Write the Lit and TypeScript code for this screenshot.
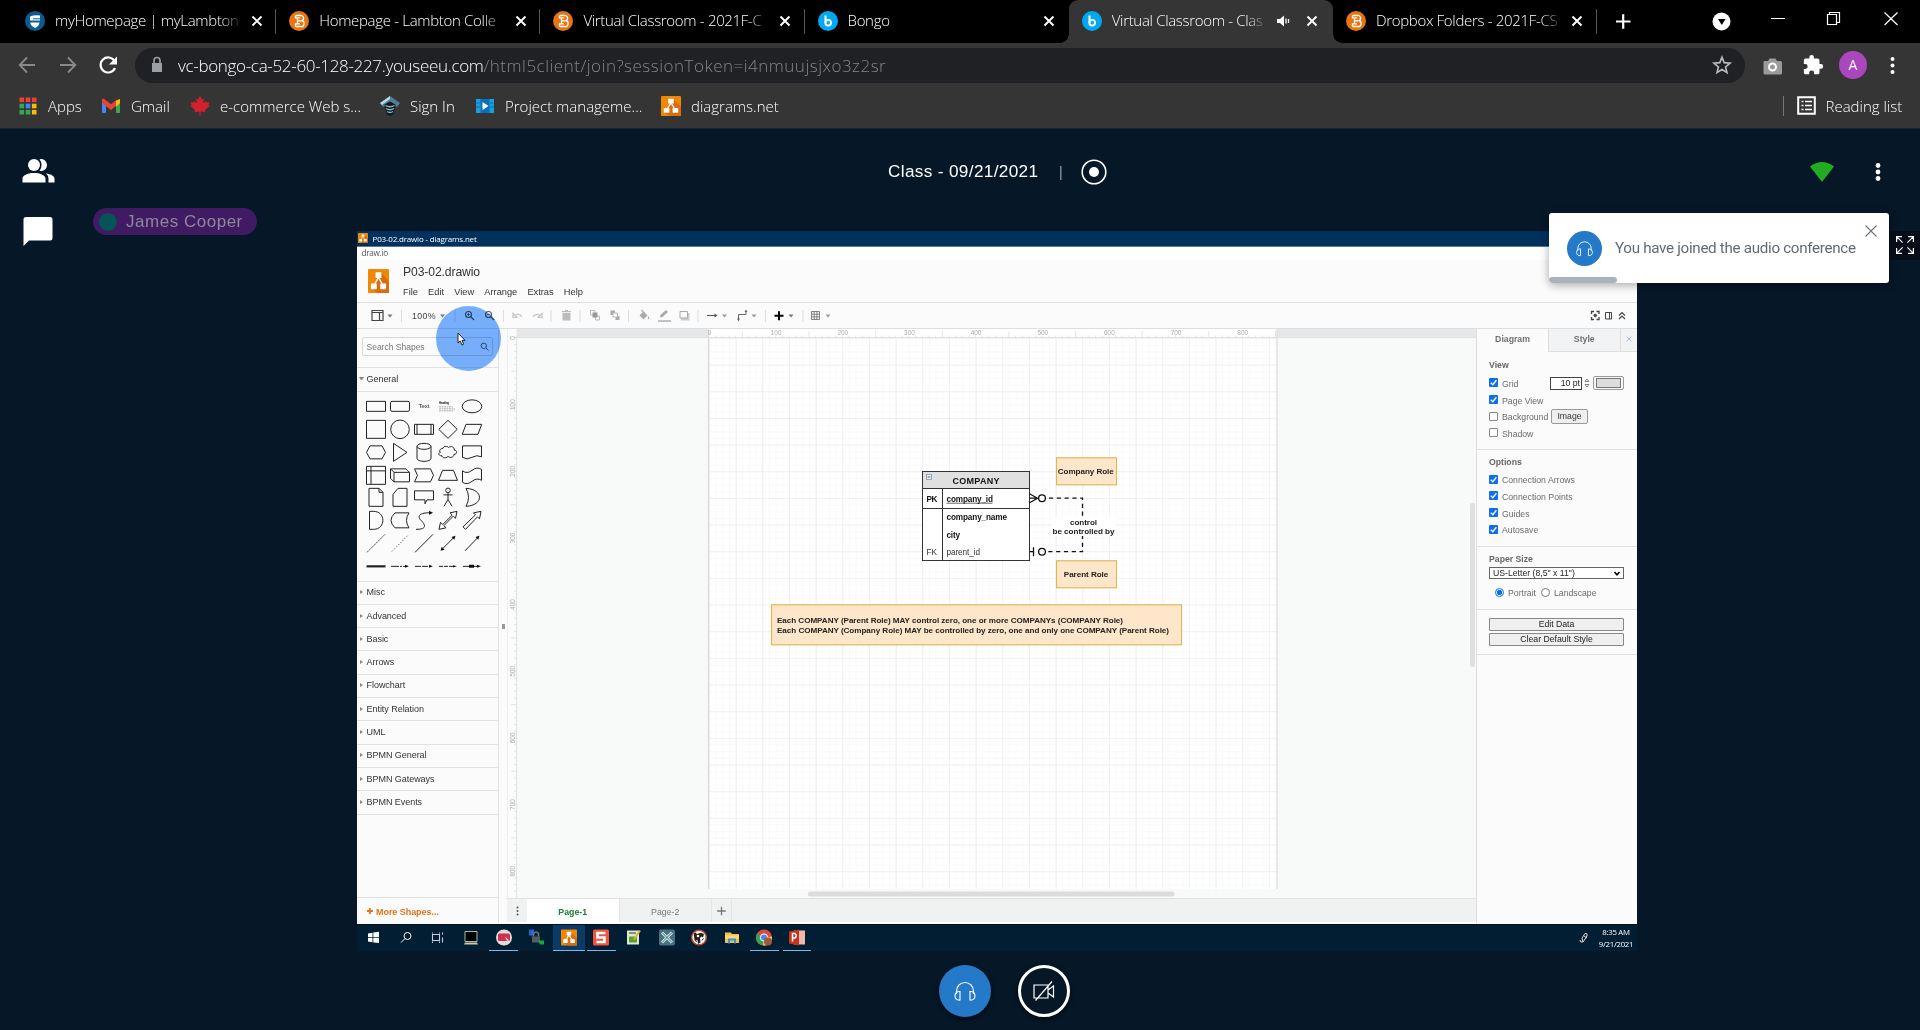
import { LitElement, html, svg, css } from "lit";
import { customElement } from "lit/decorators.js";
import { classMap } from "lit/directives/class-map.js";

const range = (n: number) => Array.from({ length: n }, (_, i) => i);

/* ---------- shared icons ---------- */
const drawioMark = () => svg`
  <rect width="20" height="20" rx="1" fill="#f08705"/>
  <path d="M12.5 3 20 10.5V20H9L3 16l6-8z" fill="#df6c0c"/>
  <path d="M10 7 5.5 14M10 7l4.500 7" stroke="#fff" stroke-width="1.300" fill="none"/>
  <rect x="7.200" y="2.800" width="5.600" height="4.800" rx=".6" fill="#fff"/>
  <rect x="2.800" y="12" width="5.600" height="4.800" rx=".6" fill="#fff"/>
  <rect x="11.600" y="12" width="5.600" height="4.800" rx=".6" fill="#fff"/>`;

const favicons: Record<string, any> = {
  lambton: svg`<circle cx="10" cy="10" r="10" fill="#0b5c93"/><path d="M5 5.500Q10 3.500 15 4.500V9.500H5zM5.500 11.500H14.500Q14 15 10 17 6.500 15.500 5.500 13Z" fill="#fff"/><path d="M8 7.300h7v1h-7z" fill="#0b5c93"/>`,
  brightspace: svg`<circle cx="10" cy="10" r="10" fill="#e87511"/><path d="M6.500 4.500h5a2.700 2.700 0 0 1 1.300 5.200 2.900 2.900 0 0 1-1.300 5.800h-5M6.500 4.500v2.400h4.700M8.500 9.900h3.500M6.500 15.500v-2.600h4.500M8.500 6.900v6" fill="none" stroke="#fff" stroke-width="1.300"/>`,
  bongo: svg`<circle cx="10" cy="10" r="10" fill="#02a9f0"/><path d="M7.500 4.500v7.500" stroke="#fff" stroke-width="2"/><circle cx="10.200" cy="11.700" r="2.800" fill="none" stroke="#fff" stroke-width="1.900"/>`,
};

const tabs = [
  { icon: "lambton", title: "myHomepage | myLambton" },
  { icon: "brightspace", title: "Homepage - Lambton Colle" },
  { icon: "brightspace", title: "Virtual Classroom - 2021F-C" },
  { icon: "bongo", title: "Bongo" },
  { icon: "bongo", title: "Virtual Classroom - Clas", active: true, audio: true },
  { icon: "brightspace", title: "Dropbox Folders - 2021F-CS" },
];

const closeX = html`<svg class="tab-x" viewBox="0 0 12 12"><path d="M1.500 1.500l9 9M10.500 1.500l-9 9"/></svg>`;

/* ---------- bookmarks ---------- */
const colors = ["#ea4335", "#ea4335", "#ea4335", "#34a853", "#4285f4", "#fbbc05", "#34a853", "#34a853", "#fbbc05"];
const bookmarks = [
  { w: "a", text: "Apps", art: svg`${range(9).map((i) => svg`<rect x=${1.500 + (i % 3) * 6.200} y=${1.500 + Math.floor(i / 3) * 6.200} width="4.600" height="4.600" fill=${colors[i]}/>`)}` },
  { w: "b", text: "Gmail", art: svg`<path d="M1 4.500V17h4V9z" fill="#4285f4"/><path d="M19 4.500V17h-4V9z" fill="#34a853"/><path d="M15 4.500l4-1.500v4l-4 4z" fill="#fbbc04"/><path d="M1 3.200l1.500-.8L10 8.200l5-4V10l-5 4L1 7z" fill="#ea4335"/>` },
  { w: "c", text: "e-commerce Web s...", art: svg`<path d="M10 0l2 3.500 2-1-1 5 3-2.500.6 1.500 3-.4-1.200 3 1.200 1-4.600 4 .4 2-4.900-.7V20h-1v-4.600l-4.900.7.4-2-4.600-4 1.200-1-1.200-3 3 .4.600-1.500 3 2.500-1-5 2 1z" fill="#d3212c"/>` },
  { w: "d", text: "Sign In", art: svg`<path d="M10 0 0 7l3 4 7-4 7 4 3-4z" fill="#4f7f96"/><path d="M10 0 0 7l2 2L10 3z" fill="#b9d5de"/><path d="M4.500 8.500l5.500-3 5.500 3-2 9.500-3.500 2-3.500-2z" fill="#11181e"/><path d="M5.500 9.500Q10 12 14.500 9.500M6 12.500q4 2.500 8 0M7 15.500q3 2 6 0" stroke="#86b8cc" stroke-width="1.300" fill="none"/>` },
  { w: "e", text: "Project manageme...", art: svg`<path d="M1 3h18v14H1z" fill="#0a6fb5"/><path d="M1 3h4.500v14H1zM14.500 3H19v14h-4.500z" fill="#18a0dc"/><path d="M1 7h4.500M1 11h4.500M14.500 7H19M14.500 11H19" stroke="#0a6fb5"/><path d="M7.500 6l6 4-6 4z" fill="#fff"/>` },
  { w: "f", text: "diagrams.net", art: drawioMark() },
];

/* ---------- editor toolbar ---------- */
const caret = (x: number, c = "#777") => svg`<path d="M${x - 2.500} 314.500h5l-2.500 3z" fill=${c}/>`;
const toolGroups: { from: number; to: number; art: any }[] = [
  { from: 357, to: 401.5, art: svg`<path d="M372 310.500h11v10h-11zM372 312.500h11M379.500 312.500v8" fill="none" stroke="#444" stroke-width="1.200"/>${caret(390)}` },
  { from: 401.5, to: 454.5, art: svg`<text x="411.500" y="319" font-size="8.800" textLength="23.500" fill="#444">100%</text>${caret(442)}` },
  { from: 454.5, to: 503, art: svg`${[468, 488].map((x, i) => svg`<circle cx=${x} cy="314.500" r="3" fill="none" stroke="#555" stroke-width="1.100"/><path d="M${x + 2.200} 316.700l3.300 3.300" stroke="#555" stroke-width="1.200"/><path d="M${x - 1.600} 314.500h3.200" stroke="#555" stroke-width=".8"/>${i ? "" : svg`<path d="M${x} 312.900v3.200" stroke="#555" stroke-width=".8"/>`}`)}` },
  { from: 503, to: 551, art: svg`<path d="M513 313.500v4h4zM514.500 316q4-3.500 7.500.8M542 313.500v4h-4zM540.500 316q-4-3.500-7.500.8" fill="none" stroke="#c4c4c4" stroke-width="1.200"/>` },
  { from: 551, to: 580, art: svg`<path d="M562.500 313h8v7.500h-8zM562 311h9v1.200h-9zM565 310h3v1h-3z" fill="#bbb"/>` },
  { from: 580, to: 628.5, art: svg`<path d="M590.500 310.500h4.500v4.500h-4.500zM595.500 316h4v4h-4z" fill="none" stroke="#bbb"/><path d="M592.500 312.500h5v5h-5z" fill="#999"/><path d="M610.500 310.500h4.500v4.500h-4.500zM615.500 316h4v4h-4z" fill="#aaa"/><path d="M613 313h4.500v4h-4.500z" fill="#fbfbfb" stroke="#bbb"/>` },
  { from: 628.5, to: 697.5, art: svg`<path d="M639 315.500l4-4 4 4-4 4z" fill="#aaa"/><path d="M641 310l3 3.500M648 316.500v2.500" stroke="#aaa" stroke-width="1.200"/><path d="M659.500 317.500l.5-2.500 5.500-5 2 2-5.500 5z" fill="#aaa"/><path d="M657.500 321h13" stroke="#bbb" stroke-width="1.800"/><path d="M680.500 313h8.500v7.500h-8.500z" fill="#ccc"/><path d="M679.500 311.500h7.500v6.500h-7.500z" fill="#fbfbfb" stroke="#aaa"/>` },
  { from: 697.5, to: 765, art: svg`<path d="M706.500 315.500h9" stroke="#555" stroke-width="1.100"/><path d="M714 313.500l3 2-3 2z" fill="#555"/>${caret(724, "#999")}<path d="M738 319v-4.500h7.500v-3" fill="none" stroke="#666"/><path d="M736.500 318.500h3l-1.500 3zM744 312h3l-1.500-2.500z" fill="#666"/>${caret(753.5, "#999")}` },
  { from: 765, to: 803, art: svg`<path d="M774.500 315.700h9M779 311.200v9" stroke="#000" stroke-width="2"/>${caret(791)}` },
  { from: 803, to: 850, art: svg`<path d="M811.500 311.500h8v8h-8zM814.200 311.500v8M816.900 311.500v8M811.500 314.200h8M811.500 316.900h8" fill="none" stroke="#777" stroke-width=".9"/>${caret(828, "#999")}` },
];

/* ---------- shape palette; each glyph is centred on the origin ---------- */
const P = (d: string) => svg`<path d=${d}/>`;
const shapes: any[] = [
  P("M-9.500-5h19v10h-19z"), svg`<rect x="-9.500" y="-5" width="19" height="10" rx="1.500"/>`,
  svg`<text x="-5.500" y="2" font-size="6" textLength="11" lengthAdjust="spacingAndGlyphs" class="ink">Text</text>`,
  svg`<text x="-9" y="-2" font-size="3" font-weight="bold" textLength="10" class="ink">Heading</text><path d="M-9 .5h14M-9 2.500h16M-9 4.500h15" stroke="#999" stroke-dasharray="2 .5" stroke-width=".8"/>`,
  svg`<ellipse rx="9.800" ry="6.500"/>`,
  P("M-9.500-9h19v18h-19z"), svg`<circle r="9.300"/>`, P("M-9.500-5h19v10h-19zM-7-5v10M7-5v10"), P("M0-9l9.200 9L0 9l-9.200-9z"), P("M-6-5H9.700L6 5h-15.700z"),
  P("M-6-6.500H6L9.500 0 6 6.500H-6L-9.500 0z"), P("M-6.500-9L7 0-6.500 9z"), svg`<path d="M-7-6V6c0 4 14 4 14 0V-6"/><ellipse cy="-6" rx="7" ry="3"/>`,
  P("M-5-4c1-3 5-2 5.500-.8C3-7 7-5 6-2.500c4 1 3 4.500 0 4.500 0 3-4 4-6 2-2 2.500-6 1.500-6-.5-4 0-4-3-1.500-3.500-2-1.500 0-4 2.500-4z"), P("M-9.500-6.500h19V4.500Q5 2 0 5t-9.500 0z"),
  P("M-9.500-9h19v18h-19zM-9.500-4.500h19M-5-9v18"), P("M-9.500-6.500H6L9.500-3V6.500H-6L-9.500 3zM-9.500-6.500L-6-3H9.500M-6-3v9.500"), P("M-9.500-6.500H6.500L9.500 0 6.500 6.500h-16l3-6.500z"), P("M-5.500-5h11L9.500 5h-19z"), P("M-9.500-4.500Q-5-1 0-5t9.500-1V5Q5 2 0 6t-9.500 1z"),
  P("M-7-9H3l4 4V9H-7zM3-9v4h4"), P("M-2-9h9V9H-7v-12z"), P("M-9.500-6.500h19v9H3L1 6.500V2.500H-9.500z"), svg`<circle cy="-7" r="2.300"/><path d="M0-4.500V2M-4.500-2.500h9M0 2l-4 7M0 2l4 7"/>`, P("M-6-9C12-8 12 8-6 9Q-1 0-6-9z"),
  P("M-6.500-9h4C10-9 10 9-2.500 9h-4z"), P("M-5-7.500H9Q4 0 9 7.500H-5Q-13 0-5-7.500z"), svg`<path d="M-8 9c12 0 9-5 5-9s-2-8 10-7.500"/><path d="M5-9.500l4 2-4 2z" class="solid"/>`,
  P("M-9 9l1.500-7 2.200 2.200L4.200-5.300 2-7.500 9-9 7.500-2 5.300-4.200-4.200 5.300-2 7.500z"), P("M-9 6.500L3.500-5.500 1.500-7.500 9-9 7.500-1.500l-2-2L-6.500 9z"),
  svg`<path d="M-9 9L9-9" stroke-dasharray="2 .6" stroke-width=".8"/>`, svg`<path d="M-8 8L8-8" stroke-dasharray="1 2" stroke-width=".9"/>`, P("M-9 9L9-9"), svg`<path d="M-6 6L6-6"/><path d="M-7.500 7.500l1.200-4L-3.500 6.300zM7.500-7.500L6.300-3.500 3.500-6.300z" class="solid"/>`, svg`<path d="M-7 7.500L6-6"/><path d="M7.500-7.500L6.300-3.500 3.500-6.300z" class="solid"/>`,
  svg`<path d="M-9.500 0h19" stroke-width="2.200"/>`, svg`<path d="M-9 0H6" stroke-dasharray="8 1 2 1"/><path d="M5-1.500l4 1.500-4 1.500z" class="solid"/>`, svg`<path d="M-9 0H6" stroke-dasharray="6 1"/><path d="M5-1.500l4 1.500-4 1.500z" class="solid"/>`, svg`<path d="M-9 0H6" stroke-dasharray="4 1"/><path d="M5-1.200l4 1.200-4 1.200z" class="solid"/>`, svg`<path d="M-9 0H6"/><path d="M5-1.500l4 1.500-4 1.500zM-3-1.500h5v3h-5z" class="solid"/>`,
];
const sections = ["Misc", "Advanced", "Basic", "Arrows", "Flowchart", "Entity Relation", "UML", "BPMN General", "BPMN Gateways", "BPMN Events"];

const taskIcons: { art: any; state?: string }[] = [
  { art: svg`<path d="M-5-4l4.500-.8V-.5H-5zM.3-5L6-5.800V-.5H.3zM-5 .3h4.500v4.500L-5 4zM.3.300H6V5.600L.3 4.900z" fill="#fff"/>` },
  { art: svg`<circle cx="1.500" cy="-1.500" r="3.500" fill="none" stroke="#fff"/><path d="M-1 1l-4 4" stroke="#fff"/>` },
  { art: svg`<path d="M-5.500-3h7v6h-7zM-5.500-5v1M1.500-5v1M-5.500 4v1.500M1.500 4v1.500M4.500-5v2M4.500 0v5" fill="none" stroke="#ccd" stroke-width="1.100"/>` },
  { art: svg`<path d="M-6-6H6V4H-6z" fill="#000" stroke="#a9b7a8"/><path d="M-6 5H6l1 2H-7z" fill="#ccc9b0"/>` },
  { art: svg`<circle r="8" fill="#ddd"/><rect x="-6" y="-4" width="12" height="7.500" rx="1.500" fill="#d32e4b"/><path d="M1-1l4 4-2 .3z" fill="#fff"/>`, state: "open" },
  { art: svg`<path d="M-7-8h5v6h-5z" fill="#1c66d8"/><path d="M-4-1h8v6h-8z" fill="#555b60"/><path d="M-2.500-1v-3q2.500-3 5 0v3" fill="none" stroke="#777" stroke-width="1.500"/><path d="M2 3h6v4H4z" fill="#18a83c"/>` },
  { art: svg`<g transform="translate(-8 -8) scale(.8)">${drawioMark()}</g>`, state: "current" },
  { art: svg`<rect x="-8" y="-8" width="16" height="16" rx="1.500" fill="#f2543f"/><path d="M4.500-4.500H-3.500V0H3.500V4.500H-4.500" fill="none" stroke="#fff" stroke-width="2.500"/>`, state: "open" },
  { art: svg`<rect x="-7" y="-7" width="12" height="14" fill="#dfe8d4"/><path d="M-5-1H3v6h-8z" fill="#5f9e2e"/><path d="M6-7L0 2" stroke="#e0b43a" stroke-width="2"/><path d="M-5-4.500h7" stroke="#333"/>` },
  { art: svg`<rect x="-8" y="-8" width="16" height="16" rx="2" fill="#42737f"/><path d="M-5-5L5 5M5-5L-5 5" stroke="#cfe2e6" stroke-width="3"/><path d="M-5-5L5 5M5-5L-5 5" stroke="#42737f" stroke-width="1"/>` },
  { art: svg`<circle r="7.300" fill="#fff" stroke="#c0452f" stroke-width="1.500"/><path d="M-5-1.500q-1-3 1.500-3.500l1.500 1.500Q1-5 2.500-4.500l2.500 1-1 3.500-1.500-1-1.500 1.500.5 4.500-2.500 1.500-.5-4-3 .5z" fill="#272019"/><circle cx="-1" cy="-1.500" r="1.300" fill="#fff"/><path d="M-4 3l2 1M3 3l1.500-2" stroke="#272019"/>` },
  { art: svg`<path d="M-7-5h6l1 1.500h7v9H-7z" fill="#f3c14b"/><path d="M-7-2H7v3H-7z" fill="#fbdc7d"/><path d="M-4 6V1h8v5H2V3h-4v3z" fill="#3a94cf"/>` },
  { art: svg`<circle r="8" fill="#dd4b3e"/><path d="M0 0L-7-4A8 8 0 0 0-1 8z" fill="#35a353"/><path d="M0 0L8-1A8 8 0 0 1-1 8z" fill="#f7cb45"/><circle r="3.600" fill="#4a86e8" stroke="#fff"/><circle cx="4" cy="4" r="4" fill="#9c5a3c"/>`, state: "open" },
  { art: svg`<rect x="-3" y="-7" width="11" height="14" fill="#f0b8a8"/><path d="M-8-6L2-8V8l-10-2z" fill="#c5351d"/><path d="M-4.500 4v-8h2.500q2.500 2.200 0 4.500h-2.500" fill="none" stroke="#fff" stroke-width="1.500"/>`, state: "open" },
];

const headphones = html`<svg class="phones" viewBox="0 0 24 24"><path d="M3.500 15V12a8.500 8.500 0 0 1 17 0v3"/><path d="M7 12.500v8.500c-3 .5-5-1.500-5-4.200s2-4.700 5-4.300zM17 12.500v8.500c3 .5 5-1.500 5-4.200s-2-4.700-5-4.300z"/></svg>`;

const UNIT = 66.65;

@customElement("app-root")
export class AppRoot extends LitElement {
  static styles = css`
    :host { display: block; width: 1920px; height: 1030px; overflow: hidden; background: #061728; font-family: "Liberation Sans", Arial, sans-serif; }
    * { box-sizing: border-box; }
    svg { display: block; flex: none; overflow: visible; }
    /* browser */
    .browser { height: 129px; background: #353535; color: #fff; font-family: "Open Sans", "Noto Sans", sans-serif; font-weight: 300; border-bottom: 1px solid #10253a; }
    .tabs { display: flex; height: 43px; background: #000; padding-left: 12px; }
    .tab { position: relative; display: flex; align-items: center; flex: none; width: 264.2px; height: 43px; padding: 0 13px 1.500px 13px; font-size: 15px; }
    .tab.sep::after { content: ""; position: absolute; right: 0; top: 9px; width: 1px; height: 25px; background: #555; }
    .tab.active { background: #353535; border-radius: 9px 9px 0 0; }
    .tab.active::before, .tab.active::after { content: ""; position: absolute; bottom: 0; width: 9px; height: 9px; background: radial-gradient(circle at 0 0, #000 8.500px, #353535 9px); }
    .tab.active::before { left: -9px; }
    .tab.active::after { right: -9px; background: radial-gradient(circle at 100% 0, #000 8.500px, #353535 9px); }
    .fav { width: 20px; height: 20px; margin-right: 10px; }
    .tab-title { width: 187.500px; white-space: nowrap; letter-spacing: -0.32px; line-height: 22px; margin: -2px 8px 0 0; -webkit-mask-image: linear-gradient(90deg, #000 164px, transparent 188px); }
    .audio .tab-title { width: 157px; -webkit-mask-image: linear-gradient(90deg, #000 134px, transparent 157px); }
    .tab-x { width: 12px; height: 12px; stroke: #fff; stroke-width: 1.900; }
    .speaker { width: 14px; height: 12px; margin-right: 15px; fill: #fff; stroke: #fff; }
    .tab-tools { width: 325px; height: 43px; margin-left: -2.200px; }
    .address { display: flex; align-items: center; height: 45px; padding-bottom: 1px; }
    .nav { width: 135px; height: 44px; }
    .omni { display: flex; align-items: center; width: 1610px; height: 35px; border-radius: 18px; background: #202124; padding: 0 12px 0 14px; font-size: 17px; letter-spacing: .5px; color: #85868a; }
    .omni b { font-weight: 300; color: #fff; letter-spacing: -0.32px; }
    .lock { width: 16px; height: 18px; margin-right: 13px; }
    .url { flex: 1; white-space: nowrap; }
    .star { width: 22px; height: 22px; }
    .ext { width: 175px; height: 44px; }
    .bookmarks { display: flex; height: 36px; align-items: center; padding: 0 0 1px 18px; font-size: 15px; white-space: nowrap; }
    .bm { display: flex; align-items: center; gap: 10px; }
    .bm svg { width: 20px; height: 20px; }
    .a { width: 83px; } .b { width: 89px; } .c { width: 190px; } .d { width: 95px; } .e { width: 186px; } .f { width: 1121.500px; }
    .reading { display: flex; align-items: center; gap: 10px; height: 20px; padding-left: 13px; border-left: 1px solid #777; }
    .reading svg { width: 19px; height: 19px; }
    /* conference */
    .room { position: relative; display: flex; height: 901px; color: #fff; }
    .rail { display: flex; flex-direction: column; align-items: center; width: 75px; padding: 25px 0 0 0; gap: 26px; }
    .rail svg { width: 36px; height: 36px; }
    .main { flex: 1; display: flex; flex-direction: column; }
    .bar { display: flex; align-items: center; height: 85px; padding-left: 813px; margin-bottom: 17px; font-size: 17.200px; letter-spacing: .34px; }
    .bar .name { width: 171px; white-space: nowrap; }
    .bar .pipe { width: 22px; color: #9aa3ad; font-size: 14px; }
    .bar .rec { width: 26px; height: 26px; margin-right: 703px; }
    .bar .wifi { width: 24px; height: 20px; margin-right: 38px; }
    .bar .dots { width: 12px; height: 18px; }
    .speakerpill { position: absolute; left: 93px; top: 79px; display: flex; align-items: center; gap: 9px; width: 164px; height: 27px; padding-left: 6px; border-radius: 14px; background: #401a63; color: #8b8a9a; font-size: 17px; letter-spacing: .52px; white-space: nowrap; }
    .speakerpill i { width: 18px; height: 18px; border-radius: 50%; background: #045557; }
    .controls { display: flex; gap: 27px; justify-content: center; padding: 14px 0 0; margin-left: 13px; }
    .round { display: flex; align-items: center; justify-content: center; width: 52px; height: 52px; border-radius: 50%; background: #2579c9; box-shadow: 0 2px 5px #000a; }
    .round.off { background: #061728; border: 3px solid #fff; }
    .phones { width: 24px; height: 24px; fill: none; stroke: #fff; stroke-width: 1.100; }
    .cam { width: 22px; height: 20px; fill: none; stroke: #fff; stroke-width: 1.200; }
    .toast { position: absolute; left: 1549px; top: 84px; display: flex; align-items: center; width: 340px; height: 70px; background: #fff; border-radius: 3px; padding: 0 12px 0 18px; box-shadow: 0 2px 10px #0005; color: #4e5a66; font-family: Roboto, sans-serif; font-size: 15.200px; white-space: nowrap; overflow: hidden; }
    .toast .round { width: 35px; height: 35px; box-shadow: none; margin-right: 13px; }
    .toast .phones { width: 19px; height: 19px; }
    .toast .msg { width: 250px; letter-spacing: -.31px; opacity: .9; }
    .toast .x { width: 12px; height: 12px; margin-bottom: 35px; stroke: #6d7780; stroke-width: 1.100; }
    .progress { position: absolute; left: 0; bottom: 0; width: 68px; height: 6px; border-radius: 3px; background: #a7b3bd; }
    .full { position: absolute; left: 1889px; top: 102px; width: 31px; height: 29px; background: #040d18; padding: 5px 6px 6px 7px; }
    .full svg { width: 18px; height: 18px; fill: none; stroke: #fff; stroke-width: 1.200; }
    /* shared desktop */
    .desk { display: flex; flex-direction: column; position: relative; width: 1280px; height: 720px; margin-left: 282px; background: #fbfbfb; color: #333; }
    .wintitle { display: flex; align-items: center; gap: 4.500px; height: 15px; padding-left: 1px; background: #00305c; color: #fff; font: 8px "Open Sans", sans-serif; letter-spacing: -.18px; white-space: nowrap; }
    .wintitle svg { width: 10px; height: 10px; }
    .winmenu { height: 14px; background: #fff; padding: 0 0 0 4.500px; color: #555; font: 8.200px/11px "Open Sans", sans-serif; letter-spacing: -.3px; border-top: 1px solid #5d7894; }
    .head { display: flex; height: 44px; padding: 9px 0 0 11px; gap: 14px; border-bottom: 1px solid #e0e0e0; }
    .head > svg { width: 21px; height: 24px; }
    .file { font-size: 12.200px; line-height: 13px; margin-top: -2.500px; color: #333; letter-spacing: -.12px; }
    .menus { display: flex; gap: 10.200px; font-size: 9.250px; line-height: 12px; margin-top: 6.500px; white-space: nowrap; }
    .tools { display: flex; height: 26px; border-bottom: 1px solid #dcdee0; }
    .grow { flex: 1; }
    .work { display: flex; height: 594px; }
    .side { display: flex; flex-direction: column; width: 142px; border-right: 1px solid #e0e0e0; font-size: 9px; color: #333; }
    .search { display: flex; align-items: center; justify-content: space-between; height: 19px; margin: 8px 5px 11px; padding: 0 3.500px; border: 1px solid #d8d8d8; border-radius: 2px; color: #777; font-size: 8.500px; }
    .search svg { width: 9px; height: 9px; stroke: #666; fill: none; }
    .sec { display: flex; align-items: center; gap: 3.500px; height: 23.300px; padding: 0 0 1px 3px; border-top: 1px solid #e2e2e2; letter-spacing: -.04px; }
    .sec i { width: 3px; border: 2px solid transparent; border-left: 3px solid #888; border-right: 0; }
    .sec.open i { width: 5px; border: 2.500px solid transparent; border-top: 3px solid #888; border-bottom: 0; margin-left: -1px; }
    .sec.open { gap: 2.500px; }
    .palette { display: grid; grid-template-columns: repeat(5, 24px); grid-auto-rows: 22.750px; padding: 3.700px 0 0 7px; height: 190px; border-top: 1px solid #e2e2e2; }
    .palette svg { width: 24px; height: 22.700px; fill: none; stroke: #222; stroke-width: 1; }
    .ink { fill: #222; stroke: none; } .solid { fill: #111; stroke: none; }
    .last { border-top: 1px solid #e2e2e2; flex: 1; }
    .more { display: flex; gap: 3px; align-items: center; height: 26px; padding: 2px 0 0 10px; border-top: 1px solid #e2e2e2; color: #e0751b; font-size: 9px; font-weight: bold; letter-spacing: -.05px; }
    .more svg { width: 6px; height: 6px; stroke: #e0751b; stroke-width: 1.800; margin-bottom: 2px; }
    .split { display: flex; align-items: center; justify-content: center; width: 8px; padding: 0 0 0 1px; }
    .split i { width: 3px; height: 5px; background: #999; }
    .center { display: flex; flex-direction: column; width: 969px; }
    .canvas { width: 969px; height: 569px; overflow: hidden; }
    .pages { display: flex; height: 25px; background: #f0f1f1; border-top: 1px solid #e0e2e2; border-bottom: 1px solid #fff; font-size: 8.800px; color: #777; text-align: center; line-height: 26px; }
    .pages .dots3 { width: 20px; } .pages .p { width: 92.500px; border-right: 1px solid #e4e5e5; height: 23px; }
    .pages .on { background: #fff; color: #188038; font-weight: bold; }
    .pages .add { width: 20px; border-right: 1px solid #e4e5e5; }
    .pages svg { height: 24px; width: 100%; }
    .format { width: 161px; border-left: 1px solid #dcdee0; font-size: 8.700px; color: #6a6a6a; display: flex; flex-direction: column; }
    .ftabs { display: grid; grid-template-columns: 71px 71.500px 1fr; height: 23px; line-height: 20px; text-align: center; font-weight: bold; color: #707070; }
    .ftabs .idle { background: #f1f3f4; border-left: 1px solid #dcdee0; border-bottom: 1px solid #dcdee0; }
    .ftabs svg { width: 6px; height: 6px; margin: 7px auto; stroke: #a9bfd4; }
    .panel { padding: 8px 13px 0 12px; border-bottom: 1px solid #e0e0e0; display: flex; flex-direction: column; }
    .p1 { height: 97.500px; } .p2 { height: 97px; padding-top: 7.500px; } .p3 { height: 63px; padding-top: 7.200px; } .p4 { height: 45px; gap: 2px; }
    h4 { margin: 0 0 3.500px; font-size: 8.700px; line-height: 11px; color: #666; }
    .p2 h4 { margin-bottom: 3px; } .p3 h4 { margin-bottom: 4.300px; }
    .row { display: flex; align-items: center; gap: 4px; height: 16.700px; white-space: nowrap; }
    .chk { width: 9px; height: 9px; background: #fff; border: 1px solid #888; border-radius: 1px; margin-bottom: 1px; }
    .chk.on { background: #0b6ff0; border: 0; }
    .row span { padding-top: 1.500px; }
    .row .g { width: 44px; } .row .bk { width: 45px; }
    .num { width: 32px; height: 13px; border: 1.500px solid #444; background: #fff; color: #222; text-align: right; padding-right: 1px; line-height: 11px; }
    .spin { width: 6px; height: 12px; stroke: #888; fill: none; margin-left: -2px; }
    .color { width: 31px; height: 14px; border: 1px solid #999; border-radius: 2px; padding: 1px 2px; margin-left: -1px; }
    .color i { display: block; height: 100%; background: #ddd; border: 1px solid #777; }
    .img { width: 37px; height: 15px; line-height: 12px; text-align: center; border: 1px solid #999; border-radius: 2px; background: #efefef; color: #333; margin-bottom: 1px; }
    .select { display: flex; align-items: center; justify-content: space-between; height: 12px; border: 1px solid #666; background: #fff; color: #222; padding: 0 3px; margin-top: -2px; }
    .select svg { width: 6px; height: 5px; stroke: #000; stroke-width: 1.500; fill: none; }
    .radios { display: flex; align-items: center; gap: 4px; padding: 6px 0 0 6px; height: 22px; }
    .radio { width: 9px; height: 9px; border-radius: 50%; border: 1px solid #777; background: #fff; margin-bottom: 2px; }
    .radio.on { border-color: #0b6ff0; background: radial-gradient(circle, #0b6ff0 2.300px, #fff 3px); }
    .radios span + .radio { margin-left: 1px; }
    .btn { height: 13px; line-height: 11px; border: 1px solid #888; background: #efefef; color: #222; text-align: center; border-radius: 1px; }
    .task { display: flex; height: 27px; background: #021e33; border-top: 1px solid #02101f; margin-top: 1px; }
    .ti { display: flex; justify-content: center; width: 32.600px; border-bottom: 1.500px solid transparent; background-clip: padding-box; }
    .ti svg { width: 26px; height: 24px; }
    .ti.open { border-image: linear-gradient(90deg, transparent 3px, #76b9ed 3px, #76b9ed calc(100% - 3px), transparent 0) 1; border-width: 0 0 1.500px; border-style: solid; }
    .ti.current { background: #0b3a66; border-bottom: 1.500px solid #76b9ed; }
    .pen { width: 10px; height: 12px; margin: 7px 7px 0 0; stroke: #ddd; fill: none; }
    .clock { width: 40px; font: 7.800px/12px "Open Sans", sans-serif; color: #fff; text-align: center; letter-spacing: -.28px; margin: 1px 1px 0 0; white-space: nowrap; }
    .halo { position: absolute; left: 79px; top: 75px; width: 65px; height: 65px; border-radius: 50%; background: #78b1ff; mix-blend-mode: multiply; }
    .pointer { position: absolute; left: 100px; top: 101px; width: 9px; height: 14px; }
  `;

  private browser() {
    return html`<div class="browser">
      <div class="tabs">
        ${tabs.map((t, i) => html`<div class=${classMap({ tab: true, sep: i < 3 || i === 5, active: !!t.active, audio: !!t.audio })}>
          <svg class="fav" viewBox="0 0 20 20">${favicons[t.icon]}</svg>
          <span class="tab-title">${t.title}</span>
          ${t.audio ? html`<svg class="speaker" viewBox="0 0 14 12"><path d="M0 4h3l4-3.500v11L3 8H0z" stroke="none"/><path d="M9 3.500v5M11.500 4v4" fill="none" stroke-width="1.300"/></svg>` : ""}
          ${closeX}
        </div>`)}
        <svg class="tab-tools" viewBox="1595 0 325 43">
          <path d="M1616 21.500h14.500M1623.200 14.200v14.500" stroke="#fff" stroke-width="2.200"/>
          <circle cx="1721.500" cy="21.500" r="9" fill="#fff"/><path d="M1718 19h7.500l-3.700 6z" fill="#000"/>
          <path d="M1771 18.500h14M1827.500 14.500h9v10h-9zM1829.500 14.500v-2h10v10h-3M1884.500 12.500l13 12.500M1897.500 12.500l-13 12.500" stroke="#fff" stroke-width="1.200" fill="none"/>
        </svg>
      </div>
      <div class="address">
        <svg class="nav" viewBox="0 43 135 44">
          <path d="M35 65H20M27 57.500L19.700 65l7.300 7.500M60 65h15M68 57.500l7.300 7.500-7.300 7.500" fill="none" stroke="#8a8a8a" stroke-width="1.800"/>
          <path d="M114.500 61A7.500 7.500 0 1 0 115 68" fill="none" stroke="#fff" stroke-width="2.200"/><path d="M117 56.500v8h-8z" fill="#fff"/>
        </svg>
        <div class="omni">
          <svg class="lock" viewBox="0 0 16 18"><path d="M3 7h10v9H3z" fill="#9aa0a6"/><path d="M5 7V4.500a3 3 0 0 1 6 0V7" fill="none" stroke="#9aa0a6" stroke-width="1.600"/></svg>
          <span class="url"><b>vc-bongo-ca-52-60-128-227.youseeu.com</b>/html5client/join?sessionToken=i4nmuujsjxo3z2sr</span>
          <svg class="star" viewBox="0 0 24 24"><path d="M12 3.500l2.400 5.900 6.400.5-4.900 4.200 1.500 6.200-5.400-3.300-5.400 3.300 1.500-6.200-4.900-4.200 6.400-.5z" fill="none" stroke="#bbb" stroke-width="1.800"/></svg>
        </div>
        <svg class="ext" viewBox="1745 43 175 44">
          <path d="M1764 61h4l1.500-2.500h6L1777 61h3.500q1.500 0 1.500 1.500V73q0 1.500-1.500 1.500H1765q-1.500 0-1.500-1.500V62.500z" fill="#9b9b9b"/><circle cx="1772.500" cy="67" r="3.500" fill="none" stroke="#fff" stroke-width="2"/>
          <path transform="translate(1802 54) scale(.92)" d="M20.500 11H19V7c0-1.100-.9-2-2-2h-4V3.500a2.500 2.500 0 0 0-5 0V5H4c-1.100 0-2 .9-2 2v3.800h1.500a2.700 2.700 0 0 1 0 5.400H2V20c0 1.100.9 2 2 2h3.800v-1.500a2.700 2.700 0 0 1 5.400 0V22H17c1.100 0 2-.9 2-2v-4h1.500a2.500 2.500 0 0 0 0-5z" fill="#fff"/>
          <circle cx="1853" cy="65" r="14" fill="#ab47bc"/><text x="1853" y="70" text-anchor="middle" fill="#fff" font-size="14" font-weight="400">A</text>
          <g fill="#fff"><circle cx="1892.500" cy="59" r="2"/><circle cx="1892.500" cy="65.500" r="2"/><circle cx="1892.500" cy="72" r="2"/></g>
        </svg>
      </div>
      <div class="bookmarks">
        ${bookmarks.map((b) => html`<div class="bm ${b.w}"><svg viewBox="0 0 20 20">${b.art}</svg>${b.text}</div>`)}
        <div class="reading"><svg viewBox="0 0 19 19"><path d="M1.200 1.200h16.600v16.600H1.200z" fill="none" stroke="#fff" stroke-width="2"/><path d="M4.500 5.500h2M4.500 9.500h2M4.500 13.500h2M8 5.500h7M8 9.500h7M8 13.500h7" stroke="#fff" stroke-width="1.700"/></svg>Reading list</div>
      </div>
    </div>`;
  }

  private diagram() {
    const X0 = 709, Y0 = 338;
    return html`<svg class="canvas" viewBox="507 329 969 569">
      <defs>
        <pattern id="minor" x=${X0} y=${Y0} width="6.665" height="6.665" patternUnits="userSpaceOnUse"><path d="M.5 0v6.665M0 .5h6.665" stroke="#f9f9f9" stroke-width="1"/></pattern>
        <pattern id="major" x=${X0} y=${Y0} width="26.660" height="26.660" patternUnits="userSpaceOnUse"><path d="M.5 0v26.660M0 .5h26.660" stroke="#f0f0f0" stroke-width="1"/></pattern>
      </defs>
      <rect x="507" y="329" width="970" height="570" fill="#f8faf9"/>
      <rect x="516" y="329" width="961" height="9" fill="#e6e7e8"/>
      <rect x="709" y="329" width="568" height="9" fill="#fff"/>
      <rect x="507" y="329" width="9.500" height="570" fill="#fcfcfc"/>
      <path d="M509.500 338q2.500 4 5 0" fill="none" stroke="#ccc"/>
      <rect x="709" y="338" width="568" height="551" fill="#fff"/>
      <rect x="709" y="338" width="568" height="551" fill="url(#minor)"/>
      <rect x="709" y="338" width="568" height="551" fill="url(#major)"/>
      <path d="M708.500 338v551M1277 329v560" stroke="#d9dbdd" stroke-width="1.200"/>
      <path d="M516 337.500h961M516.500 338v560M507 329v570" stroke="#e0e2e4" fill="none"/>
      ${range(86).map((i) => svg`<path d="M${X0 + i * 6.665} ${i % 5 ? 335.5 : 331}V337.500" stroke="#ddd" stroke-width=".8"/>`)}
      ${range(84).map((i) => svg`<path d="M${i % 5 ? 514 : 511} ${Y0 + i * 6.665}H516.500" stroke="#ddd" stroke-width=".8"/>`)}
      ${range(9).map((i) => svg`<rect x=${X0 + i * UNIT - 5.5} y="329.500" width="11" height="6" fill=${i ? "#fff" : "none"}/><text x=${X0 + i * UNIT + .5} y="335" text-anchor="middle" font-size="6.400" fill="#aaa">${i * 100}</text>
        <g transform="translate(514.500 ${Y0 + i * UNIT}) rotate(-90)"><rect x="-5.500" y="-5" width="11" height="5.500" fill="#fcfcfc"/><text text-anchor="middle" font-size="6.400" fill="#aaa">${i * 100}</text></g>`)}
      <rect x="808" y="891.500" width="366.500" height="5" rx="2" fill="#dcdcdc"/>
      <rect x="1470" y="503" width="5" height="164" rx="2" fill="#dfdfdf"/>

      <rect x="922.500" y="471.500" width="107" height="89" fill="#fff" stroke="#333"/>
      <rect x="922.500" y="471.500" width="107" height="17" fill="#e0e0e0" stroke="#333"/>
      <path d="M922.500 508.500h107M942.500 488.500v72" stroke="#333"/>
      <rect x="926.500" y="474.500" width="5" height="5" fill="#eef3f8" stroke="#8899aa" stroke-width=".8"/><path d="M927.500 477h3" stroke="#567"/>
      <g fill="#111" font-weight="bold" font-size="8.200">
        <text x="952.500" y="483.500" font-size="9" textLength="47">COMPANY</text>
        <text x="926.500" y="501.500" textLength="11">PK</text><text x="946.500" y="501.500" textLength="46.500">company_id</text>
        <text x="946.500" y="520" textLength="60.500">company_name</text>
        <text x="946.500" y="537.500" textLength="13.500">city</text>
        <g font-weight="normal" fill="#333"><text x="926.500" y="555" textLength="10.500">FK</text><text x="946.500" y="555" textLength="33.500">parent_id</text></g>
      </g>
      <path d="M946.500 503.200h46" stroke="#222" stroke-width=".7"/>
      <g fill="none" stroke="#111" stroke-width="1.300">
        <path d="M1029.500 493.700l8 4.500-8 4.500M1029.500 498.200h8M1033.500 547.200v9M1029.500 551.700h4"/>
        <circle cx="1042" cy="498.200" r="3.400"/><circle cx="1042" cy="551.700" r="3.400"/>
        <path d="M1049 498.200h33.500v53.500H1046" stroke-dasharray="4.200 3.600"/>
      </g>
      <rect x="1052" y="517" width="64" height="19" fill="#fff"/>
      <g fill="#fde6c9" stroke="#dcb653" stroke-width="1.100"><rect x="1056.500" y="457.800" width="60" height="27"/><rect x="1056.500" y="560.800" width="60" height="27"/><rect x="771.500" y="604.800" width="410" height="40"/></g>
      <g fill="#222" font-weight="bold" font-size="8.100">
        <text x="1070" y="525" textLength="27">control</text><text x="1052.500" y="534" textLength="62">be controlled by</text>
        <text x="1057.800" y="474" textLength="56">Company Role</text><text x="1063.800" y="577" textLength="44.500">Parent Role</text>
        <text x="777" y="623" textLength="346">Each COMPANY (Parent Role) MAY control zero, one or more COMPANYs (COMPANY Role)</text>
        <text x="777" y="632.500" textLength="392">Each COMPANY (Company Role) MAY be controlled by zero, one and only one COMPANY (Parent Role)</text>
      </g>
    </svg>`;
  }

  private check(label: string, on: boolean, cls = "", extra: unknown = "") {
    return html`<div class="row"><svg class=${classMap({ chk: true, on })} viewBox="0 0 9 9">${on ? svg`<path d="M1.800 4.700l2 2 3.600-4.400" fill="none" stroke="#fff" stroke-width="1.400"/>` : ""}</svg><span class=${cls}>${label}</span>${extra}</div>`;
  }

  private format() {
    return html`<div class="format">
      <div class="ftabs"><div>Diagram</div><div class="idle">Style</div><div class="idle"><svg viewBox="0 0 6 6"><path d="M.5.500l5 5M5.500.500l-5 5"/></svg></div></div>
      <div class="panel p1"><h4>View</h4>
        ${this.check("Grid", true, "g", html`<div class="num">10 pt</div><svg class="spin" viewBox="0 0 6 12"><path d="M1 4.500L3 2l2 2.500zM1 7.500L3 10l2-2.500z"/></svg><div class="color"><i></i></div>`)}
        ${this.check("Page View", true)}
        ${this.check("Background", false, "bk", html`<div class="img">Image</div>`)}
        ${this.check("Shadow", false)}
      </div>
      <div class="panel p2"><h4>Options</h4>${["Connection Arrows", "Connection Points", "Guides", "Autosave"].map((l) => this.check(l, true))}</div>
      <div class="panel p3"><h4>Paper Size</h4>
        <div class="select">US-Letter (8,5" x 11")<svg viewBox="0 0 6 5"><path d="M.5 1L3 3.800 5.500 1"/></svg></div>
        <div class="radios"><i class="radio on"></i><span>Portrait</span><i class="radio"></i><span>Landscape</span></div>
      </div>
      <div class="panel p4"><div class="btn">Edit Data</div><div class="btn">Clear Default Style</div></div>
    </div>`;
  }

  private desktop() {
    return html`<div class="desk">
      <div class="wintitle"><svg viewBox="0 0 20 20">${drawioMark()}</svg>P03-02.drawio - diagrams.net</div>
      <div class="winmenu">draw.io</div>
      <div class="head">
        <svg viewBox="0 0 20 20" preserveAspectRatio="none">${drawioMark()}</svg>
        <div><div class="file">P03-02.drawio</div>
        <div class="menus">${["File", "Edit", "View", "Arrange", "Extras", "Help"].map((m) => html`<span>${m}</span>`)}</div></div>
      </div>
      <div class="tools">
        ${toolGroups.map((g, i) => html`<svg width=${g.to - g.from} height="25" viewBox="${g.from} 303 ${g.to - g.from} 25">${g.art}${i < 9 ? svg`<path d="M${g.to} 310v12" stroke="#ddd"/>` : ""}</svg>`)}
        <div class="grow"></div>
        <svg width="50" height="25" viewBox="1587 303 50 25"><g fill="none" stroke="#444">
          <path d="M1591.500 314v-2.500h2.500M1596.500 311.500h2.500v2.500M1599 317v2.500h-2.500M1594 319.500h-2.500V317" stroke-width="1.300"/><circle cx="1595.200" cy="315.500" r="1.300" fill="#444"/>
          <path d="M1605.500 312.500h6v6.500h-6zM1609.500 312.500v6.500"/><path d="M1619 315.500l3-3 3 3M1619 319l3-3 3 3" stroke-width="1.200"/></g></svg>
      </div>
      <div class="work">
        <div class="side">
          <div class="search">Search Shapes<svg viewBox="0 0 9 9"><circle cx="3.800" cy="3.800" r="2.700"/><path d="M6 6l2.500 2.500"/></svg></div>
          <div class="sec open"><i></i>General</div>
          <div class="palette">${shapes.map((s) => html`<svg viewBox="-12 -11.350 24 22.700">${s}</svg>`)}</div>
          ${sections.map((s) => html`<div class="sec"><i></i>${s}</div>`)}
          <div class="last"></div>
          <div class="more"><svg viewBox="0 0 6 6"><path d="M0 3h6M3 0v6"/></svg>More Shapes...</div>
        </div>
        <div class="split"><i></i></div>
        <div class="center">
          ${this.diagram()}
          <div class="pages">
            <div class="dots3"><svg viewBox="0 0 19 24"><g fill="#555"><circle cx="10" cy="8.500" r="1"/><circle cx="10" cy="12" r="1"/><circle cx="10" cy="15.500" r="1"/></g></svg></div>
            <div class="p on">Page-1</div><div class="p">Page-2</div>
            <div class="add"><svg viewBox="0 0 20 24"><path d="M5.500 12h9M10 7.500v9" stroke="#777" stroke-width="1.400"/></svg></div>
          </div>
        </div>
        ${this.format()}
      </div>
      <div class="task">
        ${taskIcons.map((t) => html`<div class="ti ${t.state ?? ""}"><svg viewBox="-13 -12.500 26 24">${t.art}</svg></div>`)}
        <div class="grow"></div>
        <svg class="pen" viewBox="0 0 10 12"><path d="M1 8q0 3 3 2l4-6q1-3-2-2.500L3 6M4 10L3 6M5 4l3 2"/></svg>
        <div class="clock">8:35 AM<br>9/21/2021</div>
      </div>
      <div class="halo"></div>
      <svg class="pointer" viewBox="0 0 9 14"><path d="M1 1v10l2.300-2 1.700 4 1.700-.8L5 8.400h3z" fill="#fff" stroke="#222"/></svg>
    </div>`;
  }

  render() {
    return html`${this.browser()}
      <div class="room">
        <div class="rail">
          <svg viewBox="0 0 36 36"><g fill="#fff"><circle cx="14" cy="11" r="6"/><path d="M2.500 28.500v-4c0-3.500 6-5.500 11.500-5.500s11.500 2 11.500 5.500v4zM19.500 5.200a6 6 0 1 1 0 11.600c2.700-3.500 2.700-8 0-11.600zM26 19.500c5.500.8 8.500 2.800 8.500 5v4h-6v-4q0-3-2.500-5z"/></g></svg>
          <svg viewBox="0 0 36 36"><path d="M6 1h24q2.500 0 2.500 2.500V22q0 2.500-2.500 2.500H9L3.500 30V3.500Q3.500 1 6 1z" fill="#fff"/></svg>
        </div>
        <div class="main">
          <div class="bar">
            <span class="name">Class - 09/21/2021</span><span class="pipe">|</span>
            <svg class="rec" viewBox="0 0 26 26"><circle cx="13" cy="13" r="11.800" fill="none" stroke="#fff" stroke-width="1.600"/><circle cx="13" cy="13" r="5" fill="#fff"/></svg>
            <svg class="wifi" viewBox="0 0 24 20"><path d="M0 4.500Q12-4.500 24 4.500L12 20z" fill="#22ac22"/></svg>
            <svg class="dots" viewBox="0 0 12 18"><g fill="#fff"><circle cx="6" cy="2.500" r="2.400"/><circle cx="6" cy="9" r="2.400"/><circle cx="6" cy="15.500" r="2.400"/></g></svg>
          </div>
          ${this.desktop()}
          <div class="controls">
            <div class="round">${headphones}</div>
            <div class="round off"><svg class="cam" viewBox="0 0 22 20"><path d="M1 4h14v13H1zM15 9l5.500-4v11L15 12M2.500 19.500L19 .5"/></svg></div>
          </div>
        </div>
        <div class="speakerpill"><i></i>James Cooper</div>
        <div class="toast"><div class="round">${headphones}</div><span class="msg">You have joined the audio conference</span>
          <svg class="x" viewBox="0 0 12 12"><path d="M.5.500l11 11M11.500.500l-11 11"/></svg><div class="progress"></div></div>
        <div class="full"><svg viewBox="0 0 18 18"><path d="M.6 6V.6H6M.6.600l6 6M12 .6h5.400V6M17.400.600l-6 6M.6 12v5.400H6M.6 17.400l6-6M12 17.400h5.400V12M17.400 17.400l-6-6"/></svg></div>
      </div>`;
  }
}
